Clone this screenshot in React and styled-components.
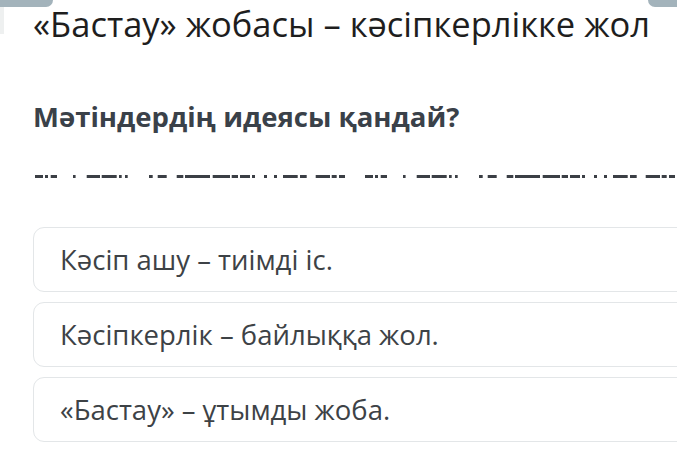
import React from "react";
import styled, { createGlobalStyle } from "styled-components";

const GlobalStyle = createGlobalStyle`
  html, body {
    margin: 0;
    padding: 0;
    background: #ffffff;
    overflow: hidden;
  }
  body {
    font-family: "Open Sans", "Noto Sans", sans-serif;
  }
`;

const Page = styled.div`
  position: relative;
  width: 677px;
  height: 472px;
  background: #fff;
  overflow: hidden;
`;

/* bits of the header above, cut off by the screenshot */
const Tab = styled.div`
  position: absolute;
  top: 0;
  ${(props) => (props.side === "left" ? "left: 0;" : "right: 0;")}
  width: ${(props) => props.w}px;
  height: 7px;
  background: #a3b3bb;
  border-radius: ${(props) =>
    props.side === "left" ? "0 0 8px 0" : "0 0 0 8px"};
`;

const EdgeStrip = styled.div`
  position: absolute;
  top: 7px;
  left: 0;
  width: 4px;
  height: 27px;
  background: #eef0f0;
`;

const Content = styled.div`
  padding: 0 0 0 33px;
`;

const Title = styled.h1`
  margin: 0;
  padding-top: 2px;
  font-family: "Open Sans", sans-serif;
  font-weight: 400;
  font-size: 34.5px;
  line-height: 44px;
  color: #1e1e1e;
  white-space: nowrap;
`;

const Question = styled.h2`
  margin: 53px 0 0;
  font-family: "Open Sans", sans-serif;
  font-weight: 700;
  font-size: 27.5px;
  line-height: 36px;
  color: #3a4149;
  white-space: nowrap;
`;

const DashLine = styled.svg`
  display: block;
  margin: 40px 0 0 2px;
`;

const Options = styled.div`
  display: flex;
  flex-direction: column;
  gap: 10px;
  margin-top: 48px;
`;

const Option = styled.div`
  box-sizing: border-box;
  display: flex;
  align-items: center;
  height: 65px;
  margin-right: -20px;
  padding-left: 26px;
  border: 1px solid #e3e6e8;
  border-radius: 11px;
  background: #fff;
  font-family: "Open Sans", sans-serif;
  font-size: 27.5px;
  color: #3d4246;
  white-space: nowrap;
`;

const segs = [
  [0, 8], [10, 13], [15.7, 22], [38, 40.6], [51.7, 65], [66.7, 81.7],
  [84, 86.7], [90, 92.7], [114, 117.7], [122.7, 131.7], [141.7, 148.3],
  [150, 175], [177.7, 195], [196.7, 203], [205, 215], [217, 220],
  [229, 232], [239, 242], [248, 262.7], [265, 271.7], [280.7, 295],
  [296.7, 301.7], [304, 310],
];

const Dashes = () => (
  <DashLine width="660" height="4" viewBox="0 0 660 4">
    {[0, 330].map((off) =>
      segs.map(([a, b], i) => (
        <rect
          key={`${off}-${i}`}
          x={off + a}
          y="0"
          width={b - a}
          height="3"
          fill="#3b3f45"
        />
      ))
    )}
  </DashLine>
);

const options = [
  "Кәсіп ашу – тиімді іс.",
  "Кәсіпкерлік – байлыққа жол.",
  "«Бастау» – ұтымды жоба.",
];

export default function App() {
  return (
    <Page>
      <GlobalStyle />
      <Tab side="left" w={53} />
      <Tab side="right" w={29} />
      <EdgeStrip />
      <Content>
        <Title>«Бастау» жобасы – кәсіпкерлікке жол</Title>
        <Question>Мәтіндердің идеясы қандай?</Question>
        <Dashes />
        <Options>
          {options.map((o) => (
            <Option key={o}>{o}</Option>
          ))}
        </Options>
      </Content>
    </Page>
  );
}
